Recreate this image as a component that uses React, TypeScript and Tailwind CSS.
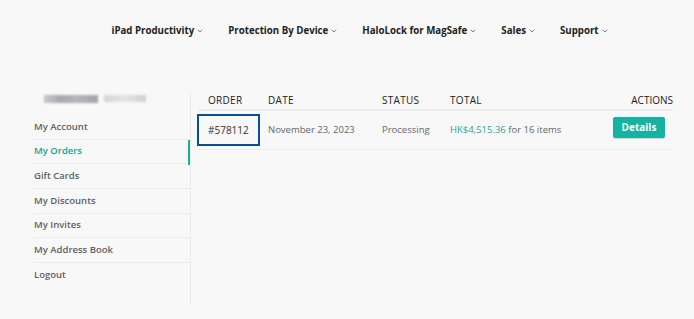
import { ChevronDown } from "lucide-react";

const navItems = ['iPad Productivity', 'Protection By Device', 'HaloLock for MagSafe', 'Sales', 'Support']

const menu = ['My Account', 'My Orders', 'Gift Cards', 'My Discounts', 'My Invites', 'My Address Book', 'Logout']

function TopNav() {
    return <div className="flex justify-center items-center h-[62px] pl-[26px] gap-[24px]">
        {navItems.map((n) => {
            return <div key={n} className="flex items-center gap-[2px] text-[9.7px] font-bold text-[#222]">
                {n}
                <ChevronDown className="w-[8px] h-[8px] text-[#444]" strokeWidth={2} />
            </div>
        })}
    </div>
}

function Sidebar() {
    return <div className="w-[156px] flex flex-col">
        <div className="h-[33px] flex items-center pl-[10px]">
            <div className="flex items-center gap-[6px] blur-[1px]">
                <div className="w-[54px] h-[8px] bg-[linear-gradient(90deg,#c9c9cd,#a8a8ae_30%,#b5b5bb_60%,#a3a3ad)]" />
                <div className="w-[42px] h-[7px] bg-[linear-gradient(90deg,#d6d6da,#e4e4e7_50%,#d0d0d5)]" />
            </div>
        </div>
        {menu.map((m, i) => {
            const active = m === 'My Orders'
            return <div key={m}
                className={`relative h-[24.67px] flex items-center text-[9.5px] font-semibold ${i < menu.length - 1 ? 'border-b border-[#ececec]' : ''} ${active ? 'text-[#16a394]' : 'text-[#5f5f5f]'}`}>
                {m}
                {active && <div className="absolute right-0 top-0 w-[2px] h-[25px] bg-[#1ab0a0]" />}
            </div>
        })}
    </div>
}

function Orders() {
    return <div className="h-[213px] border-l border-[#ebebeb] pl-[7px] pr-[21px]">
        <div className="grid grid-cols-[70px_114px_68px_1fr_80px] items-center h-[19px] border-b-2 border-[#ececec] text-[10px] font-medium text-[#222] tracking-[0.3px]">
            <div className="pl-[10px]">ORDER</div>
            <div>DATE</div>
            <div>STATUS</div>
            <div>TOTAL</div>
            <div className="text-right tracking-normal">ACTIONS</div>
        </div>
        <div className="grid grid-cols-[70px_114px_68px_1fr_80px] items-center h-[39px] border-b border-[#ececec] text-[9.5px] text-[#666]">
            <div className="ml-[-1px] w-[63px] h-[32px] border-2 border-[#0b4c9b] flex items-center pl-[9px] text-[10px] text-[#333]">#578112</div>
            <div>November 23, 2023</div>
            <div>Processing</div>
            <div><span className="text-[#2aa69a]">HK$4,515.36</span> for 16 items</div>
            <div className="flex justify-end pr-[8px] mb-[6px]">
                <button className="w-[52px] h-[21px] rounded-[2px] bg-[#15b1a1] text-white text-[10px] font-bold shadow-[0_1px_1px_rgba(0,0,0,0.15)]">Details</button>
            </div>
        </div>
    </div>
}

export default function App() {
    return <div className="w-[694px] h-[319px] bg-[#f8f8f8] overflow-hidden" style={{ fontFamily: '"Open Sans", sans-serif' }}>
        <TopNav />
        <div className="flex pl-[34px] pt-[20px]">
            <Sidebar />
            <div className="flex-1 pt-[10px]">
                <Orders />
            </div>
        </div>
    </div>
}
